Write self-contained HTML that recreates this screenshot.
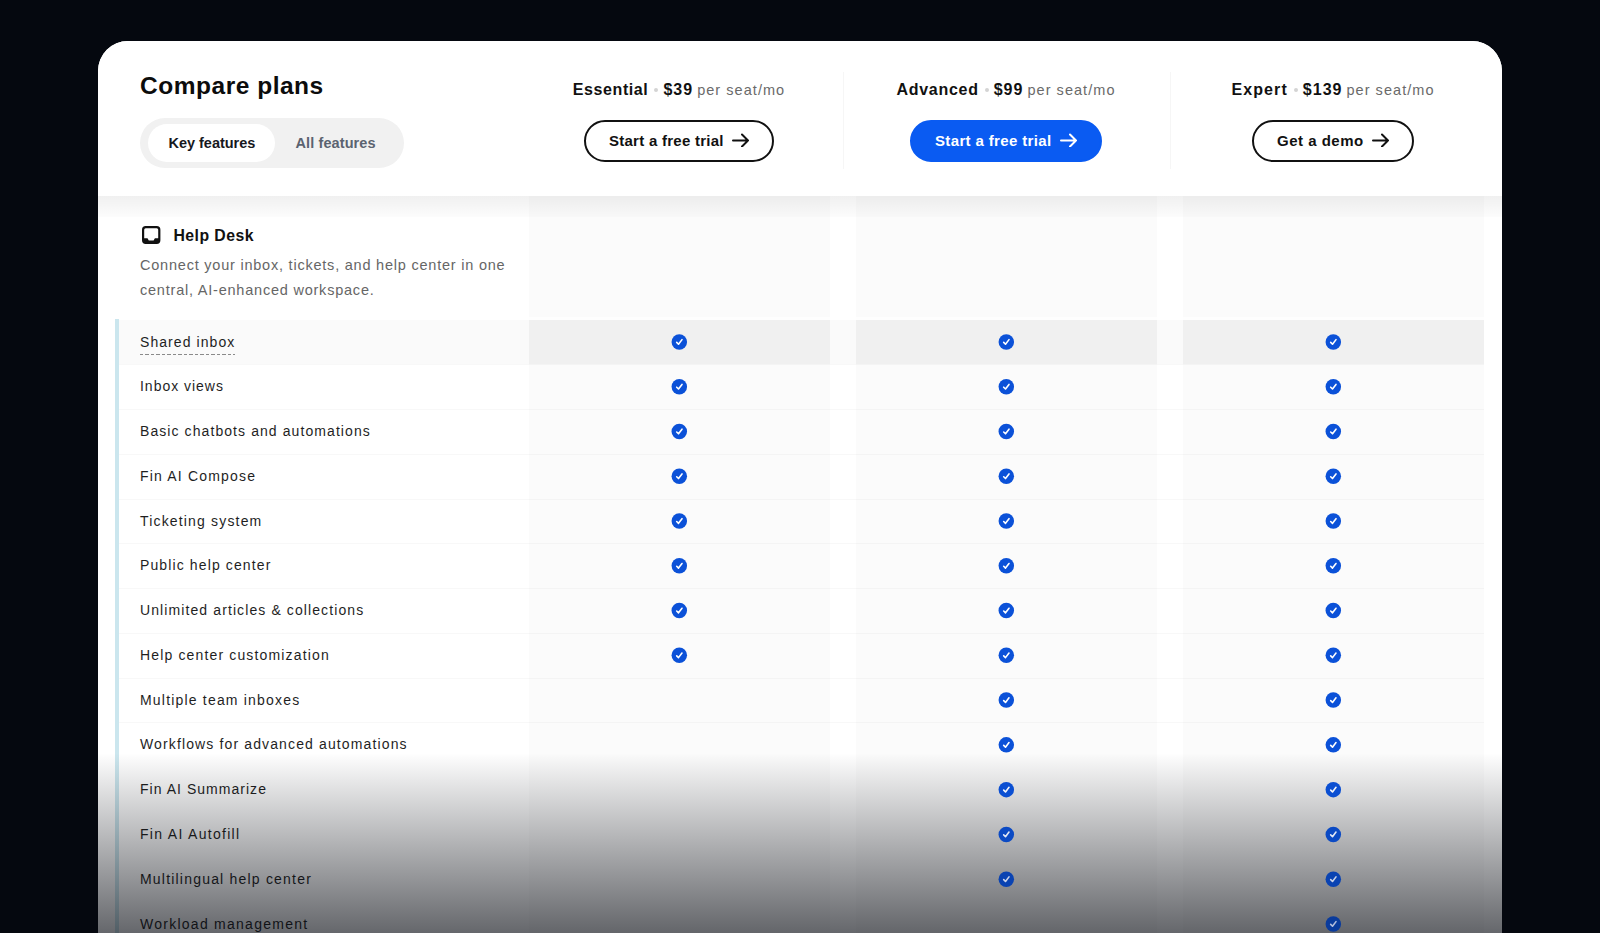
<!DOCTYPE html>
<html lang="en"><head><meta charset="utf-8"><title>Compare plans</title>
<style>
*{box-sizing:border-box;margin:0;padding:0}
html,body{width:1600px;height:933px;overflow:hidden;background:#05080f}
body{font-family:"Liberation Sans",Arial,sans-serif;color:#111;position:relative}
.card{position:absolute;left:98px;top:41px;width:1404px;height:892px;background:#fff;border-radius:30px 30px 0 0;overflow:hidden}
.hdr{position:absolute;left:0;top:0;width:1404px;height:155px;background:#fff;box-shadow:none;z-index:5}
.title{position:absolute;left:42px;top:29.5px;font-size:24.5px;font-weight:700;line-height:30px;letter-spacing:.52px;color:#0c0c0c;white-space:nowrap}
.tog{position:absolute;left:42px;top:77px;width:264px;height:50px;border-radius:25px;background:#f1f1f1}
.tog .on{position:absolute;left:8px;top:6px;width:127px;height:38px;border-radius:19px;background:#fff}
.tog span{position:absolute;top:0;height:50px;line-height:50px;font-size:14.5px;font-weight:700;white-space:nowrap}
.tog .k{left:28.5px;color:#16181d;letter-spacing:-.02px}
.tog .a{left:155.5px;color:#5b6370;letter-spacing:.1px}
.pc{position:absolute;top:0;width:327px;height:155px;text-align:center}
.pc .nm{position:absolute;left:0;right:0;top:38px;height:22px;line-height:22px;white-space:nowrap;font-size:16px;font-weight:700;color:#111}
.pc .nm .n{letter-spacing:.34px}
.pc .nm .d{display:inline-block;width:4px;height:4px;border-radius:2px;background:#d4d4d4;vertical-align:middle;margin:0 5px 1px 6px}
.pc .nm .p{letter-spacing:1px}
.pc .nm .u{font-weight:400;font-size:14.5px;color:#6a6a6a;letter-spacing:1.05px;margin-left:4px}
.btn{position:absolute;top:79px;height:42px;border-radius:21px;border:2px solid #111;background:#fff;left:50%;font-size:15px;font-weight:700;color:#111;line-height:38px;white-space:nowrap;text-align:left;padding-left:23px;letter-spacing:.24px}
.btn.b{background:#0a5bf2;border-color:#0a5bf2;color:#fff}
.btn .ar{position:absolute;top:11px;right:22px}
.sh{position:absolute;left:0;top:155px;width:1404px;height:21px;background:linear-gradient(to bottom,rgba(0,0,0,.06),rgba(0,0,0,.012));z-index:4}
.vd{position:absolute;top:31px;width:1px;height:97px;background:#f6f6f6}
.col{position:absolute;top:155px;width:301px;height:740px;background:#fbfbfb}
.sec{position:absolute;left:42px;top:183px}
.sec .ic{position:absolute;left:2px;top:2px}
.sec h3{position:absolute;left:33.5px;top:.6px;font-size:15.8px;font-weight:700;line-height:22px;letter-spacing:.45px;white-space:nowrap;color:#111}
.sec p{position:absolute;left:0;top:29px;width:400px;font-size:14.5px;line-height:25px;color:#666;letter-spacing:.78px;white-space:nowrap}
.bar{position:absolute;left:17px;top:278px;width:4px;height:620px;background:#cbe6ee}
.row{position:absolute;left:21px;width:1365px;height:44.77px;border-top:1px solid rgba(0,0,0,.028)}
.row .lb{position:absolute;left:21px;top:0;line-height:43px;font-size:14px;letter-spacing:1.1px;color:#1f1f1f;white-space:nowrap}
.row .ck{position:absolute;top:13.9px}
.cks{position:absolute;left:0;top:0;pointer-events:none}
.row.nb{border-top-color:transparent}
.gap{position:absolute;left:431px;top:276px;width:955px;height:2.5px;background:rgba(255,255,255,.7)}
.row.h{background:#fafafa;border-top:0}
.row.h i{position:absolute;top:0;height:100%;width:301px;background:#f0f0f0}
.row.h .lb{line-height:45px}
.row.h .lb span{display:inline-block;line-height:20px;padding-bottom:3.5px;background:repeating-linear-gradient(to right,#8a8a8a 0,#8a8a8a 3.5px,transparent 3.5px,transparent 5.5px) left bottom/100% 1.2px no-repeat}
.fade{position:absolute;left:0;top:712px;width:1404px;height:180px;background:linear-gradient(to bottom,rgba(7,10,17,0) 0%,rgba(7,10,17,.62) 100%);z-index:9}
</style></head><body>
<div class="card">

<div class="col" style="left:431px"></div>
<div class="col" style="left:757.5px"></div>
<div class="col" style="left:1085px"></div>
<div class="gap"></div>
<div class="bar"></div>
<div class="sh"></div>
<div class="sec"><svg class="ic" width="20" height="18" viewBox="0 0 20 18"><rect x="1.1" y="1.1" width="16.2" height="15.8" rx="2.6" fill="none" stroke="#111" stroke-width="2.2"/><path d="M1.1 12.2 H5.5 L6.8 14.4 H11.6 L12.9 12.2 H17.3 V14.5 C17.3 16 16.4 16.9 14.9 16.9 H3.5 C2 16.9 1.1 16 1.1 14.5 Z" fill="#111"/></svg><h3>Help Desk</h3><p>Connect your inbox, tickets, and help center in one<br>central, AI-enhanced workspace.</p></div>
<div class="row h" style="top:278.50px"><i style="left:410px"></i><i style="left:736.5px"></i><i style="left:1064px"></i><div class="lb" style="letter-spacing:1.07px"><span>Shared inbox</span></div></div>
<div class="row" style="top:323.27px"><div class="lb" style="letter-spacing:0.98px">Inbox views</div></div>
<div class="row" style="top:368.04px"><div class="lb" style="letter-spacing:1.08px">Basic chatbots and automations</div></div>
<div class="row" style="top:412.81px"><div class="lb" style="letter-spacing:1.18px">Fin AI Compose</div></div>
<div class="row" style="top:457.58px"><div class="lb" style="letter-spacing:1.17px">Ticketing system</div></div>
<div class="row" style="top:502.35px"><div class="lb" style="letter-spacing:1.12px">Public help center</div></div>
<div class="row" style="top:547.12px"><div class="lb" style="letter-spacing:1.1px">Unlimited articles &amp; collections</div></div>
<div class="row" style="top:591.89px"><div class="lb" style="letter-spacing:1.15px">Help center customization</div></div>
<div class="row" style="top:636.66px"><div class="lb" style="letter-spacing:1.19px">Multiple team inboxes</div></div>
<div class="row" style="top:681.43px"><div class="lb" style="letter-spacing:1.13px">Workflows for advanced automations</div></div>
<div class="row nb" style="top:726.20px"><div class="lb" style="letter-spacing:1.03px">Fin AI Summarize</div></div>
<div class="row nb" style="top:770.97px"><div class="lb" style="letter-spacing:1.3px">Fin AI Autofill</div></div>
<div class="row nb" style="top:815.74px"><div class="lb" style="letter-spacing:1.2px">Multilingual help center</div></div>
<div class="row nb" style="top:860.51px"><div class="lb" style="letter-spacing:1.26px">Workload management</div></div>
<svg class="cks" width="1404" height="892" viewBox="0 0 1404 892"><g transform="translate(573.30 292.94)"><circle cx="8" cy="8" r="7.75" fill="#0b51d8"/><path d="M5.4 8.5 L7.2 10.3 L10.7 5.7" fill="none" stroke="#fff" stroke-width="1.6" stroke-linecap="round" stroke-linejoin="round"/></g><g transform="translate(900.30 292.94)"><circle cx="8" cy="8" r="7.75" fill="#0b51d8"/><path d="M5.4 8.5 L7.2 10.3 L10.7 5.7" fill="none" stroke="#fff" stroke-width="1.6" stroke-linecap="round" stroke-linejoin="round"/></g><g transform="translate(1227.30 292.94)"><circle cx="8" cy="8" r="7.75" fill="#0b51d8"/><path d="M5.4 8.5 L7.2 10.3 L10.7 5.7" fill="none" stroke="#fff" stroke-width="1.6" stroke-linecap="round" stroke-linejoin="round"/></g><g transform="translate(573.30 337.70)"><circle cx="8" cy="8" r="7.75" fill="#0b51d8"/><path d="M5.4 8.5 L7.2 10.3 L10.7 5.7" fill="none" stroke="#fff" stroke-width="1.6" stroke-linecap="round" stroke-linejoin="round"/></g><g transform="translate(900.30 337.70)"><circle cx="8" cy="8" r="7.75" fill="#0b51d8"/><path d="M5.4 8.5 L7.2 10.3 L10.7 5.7" fill="none" stroke="#fff" stroke-width="1.6" stroke-linecap="round" stroke-linejoin="round"/></g><g transform="translate(1227.30 337.70)"><circle cx="8" cy="8" r="7.75" fill="#0b51d8"/><path d="M5.4 8.5 L7.2 10.3 L10.7 5.7" fill="none" stroke="#fff" stroke-width="1.6" stroke-linecap="round" stroke-linejoin="round"/></g><g transform="translate(573.30 382.48)"><circle cx="8" cy="8" r="7.75" fill="#0b51d8"/><path d="M5.4 8.5 L7.2 10.3 L10.7 5.7" fill="none" stroke="#fff" stroke-width="1.6" stroke-linecap="round" stroke-linejoin="round"/></g><g transform="translate(900.30 382.48)"><circle cx="8" cy="8" r="7.75" fill="#0b51d8"/><path d="M5.4 8.5 L7.2 10.3 L10.7 5.7" fill="none" stroke="#fff" stroke-width="1.6" stroke-linecap="round" stroke-linejoin="round"/></g><g transform="translate(1227.30 382.48)"><circle cx="8" cy="8" r="7.75" fill="#0b51d8"/><path d="M5.4 8.5 L7.2 10.3 L10.7 5.7" fill="none" stroke="#fff" stroke-width="1.6" stroke-linecap="round" stroke-linejoin="round"/></g><g transform="translate(573.30 427.25)"><circle cx="8" cy="8" r="7.75" fill="#0b51d8"/><path d="M5.4 8.5 L7.2 10.3 L10.7 5.7" fill="none" stroke="#fff" stroke-width="1.6" stroke-linecap="round" stroke-linejoin="round"/></g><g transform="translate(900.30 427.25)"><circle cx="8" cy="8" r="7.75" fill="#0b51d8"/><path d="M5.4 8.5 L7.2 10.3 L10.7 5.7" fill="none" stroke="#fff" stroke-width="1.6" stroke-linecap="round" stroke-linejoin="round"/></g><g transform="translate(1227.30 427.25)"><circle cx="8" cy="8" r="7.75" fill="#0b51d8"/><path d="M5.4 8.5 L7.2 10.3 L10.7 5.7" fill="none" stroke="#fff" stroke-width="1.6" stroke-linecap="round" stroke-linejoin="round"/></g><g transform="translate(573.30 472.02)"><circle cx="8" cy="8" r="7.75" fill="#0b51d8"/><path d="M5.4 8.5 L7.2 10.3 L10.7 5.7" fill="none" stroke="#fff" stroke-width="1.6" stroke-linecap="round" stroke-linejoin="round"/></g><g transform="translate(900.30 472.02)"><circle cx="8" cy="8" r="7.75" fill="#0b51d8"/><path d="M5.4 8.5 L7.2 10.3 L10.7 5.7" fill="none" stroke="#fff" stroke-width="1.6" stroke-linecap="round" stroke-linejoin="round"/></g><g transform="translate(1227.30 472.02)"><circle cx="8" cy="8" r="7.75" fill="#0b51d8"/><path d="M5.4 8.5 L7.2 10.3 L10.7 5.7" fill="none" stroke="#fff" stroke-width="1.6" stroke-linecap="round" stroke-linejoin="round"/></g><g transform="translate(573.30 516.78)"><circle cx="8" cy="8" r="7.75" fill="#0b51d8"/><path d="M5.4 8.5 L7.2 10.3 L10.7 5.7" fill="none" stroke="#fff" stroke-width="1.6" stroke-linecap="round" stroke-linejoin="round"/></g><g transform="translate(900.30 516.78)"><circle cx="8" cy="8" r="7.75" fill="#0b51d8"/><path d="M5.4 8.5 L7.2 10.3 L10.7 5.7" fill="none" stroke="#fff" stroke-width="1.6" stroke-linecap="round" stroke-linejoin="round"/></g><g transform="translate(1227.30 516.78)"><circle cx="8" cy="8" r="7.75" fill="#0b51d8"/><path d="M5.4 8.5 L7.2 10.3 L10.7 5.7" fill="none" stroke="#fff" stroke-width="1.6" stroke-linecap="round" stroke-linejoin="round"/></g><g transform="translate(573.30 561.55)"><circle cx="8" cy="8" r="7.75" fill="#0b51d8"/><path d="M5.4 8.5 L7.2 10.3 L10.7 5.7" fill="none" stroke="#fff" stroke-width="1.6" stroke-linecap="round" stroke-linejoin="round"/></g><g transform="translate(900.30 561.55)"><circle cx="8" cy="8" r="7.75" fill="#0b51d8"/><path d="M5.4 8.5 L7.2 10.3 L10.7 5.7" fill="none" stroke="#fff" stroke-width="1.6" stroke-linecap="round" stroke-linejoin="round"/></g><g transform="translate(1227.30 561.55)"><circle cx="8" cy="8" r="7.75" fill="#0b51d8"/><path d="M5.4 8.5 L7.2 10.3 L10.7 5.7" fill="none" stroke="#fff" stroke-width="1.6" stroke-linecap="round" stroke-linejoin="round"/></g><g transform="translate(573.30 606.33)"><circle cx="8" cy="8" r="7.75" fill="#0b51d8"/><path d="M5.4 8.5 L7.2 10.3 L10.7 5.7" fill="none" stroke="#fff" stroke-width="1.6" stroke-linecap="round" stroke-linejoin="round"/></g><g transform="translate(900.30 606.33)"><circle cx="8" cy="8" r="7.75" fill="#0b51d8"/><path d="M5.4 8.5 L7.2 10.3 L10.7 5.7" fill="none" stroke="#fff" stroke-width="1.6" stroke-linecap="round" stroke-linejoin="round"/></g><g transform="translate(1227.30 606.33)"><circle cx="8" cy="8" r="7.75" fill="#0b51d8"/><path d="M5.4 8.5 L7.2 10.3 L10.7 5.7" fill="none" stroke="#fff" stroke-width="1.6" stroke-linecap="round" stroke-linejoin="round"/></g><g transform="translate(900.30 651.10)"><circle cx="8" cy="8" r="7.75" fill="#0b51d8"/><path d="M5.4 8.5 L7.2 10.3 L10.7 5.7" fill="none" stroke="#fff" stroke-width="1.6" stroke-linecap="round" stroke-linejoin="round"/></g><g transform="translate(1227.30 651.10)"><circle cx="8" cy="8" r="7.75" fill="#0b51d8"/><path d="M5.4 8.5 L7.2 10.3 L10.7 5.7" fill="none" stroke="#fff" stroke-width="1.6" stroke-linecap="round" stroke-linejoin="round"/></g><g transform="translate(900.30 695.87)"><circle cx="8" cy="8" r="7.75" fill="#0b51d8"/><path d="M5.4 8.5 L7.2 10.3 L10.7 5.7" fill="none" stroke="#fff" stroke-width="1.6" stroke-linecap="round" stroke-linejoin="round"/></g><g transform="translate(1227.30 695.87)"><circle cx="8" cy="8" r="7.75" fill="#0b51d8"/><path d="M5.4 8.5 L7.2 10.3 L10.7 5.7" fill="none" stroke="#fff" stroke-width="1.6" stroke-linecap="round" stroke-linejoin="round"/></g></svg>
<div class="hdr">
<div class="title">Compare plans</div>
<div class="tog"><div class="on"></div><span class="k">Key features</span><span class="a">All features</span></div>
<div class="pc" style="left:417.5px"><div class="nm"><span class="n" style="letter-spacing:0.6px">Essential</span><span class="d"></span><span class="p">$39</span><span class="u">per seat/mo</span></div><div class="btn" style="width:190px;margin-left:-95.0px;letter-spacing:0.26px">Start a free trial<svg class="ar" viewBox="0 -0.5 18 14" width="18" height="14"><path d="M1 7 H16 M10 1 L16 7 L10 13" fill="none" stroke="currentColor" stroke-width="2" stroke-linecap="round" stroke-linejoin="round"/></svg></div></div>
<div class="pc" style="left:744.5px"><div class="nm"><span class="n" style="letter-spacing:0.72px">Advanced</span><span class="d"></span><span class="p">$99</span><span class="u">per seat/mo</span></div><div class="btn b" style="width:192px;margin-left:-96.0px;letter-spacing:0.36px">Start a free trial<svg class="ar" viewBox="0 -0.5 18 14" width="18" height="14"><path d="M1 7 H16 M10 1 L16 7 L10 13" fill="none" stroke="currentColor" stroke-width="2" stroke-linecap="round" stroke-linejoin="round"/></svg></div></div>
<div class="pc" style="left:1071.5px"><div class="nm"><span class="n" style="letter-spacing:1.1px">Expert</span><span class="d"></span><span class="p">$139</span><span class="u">per seat/mo</span></div><div class="btn" style="width:162px;margin-left:-81.0px;letter-spacing:0.5px">Get a demo<svg class="ar" viewBox="0 -0.5 18 14" width="18" height="14"><path d="M1 7 H16 M10 1 L16 7 L10 13" fill="none" stroke="currentColor" stroke-width="2" stroke-linecap="round" stroke-linejoin="round"/></svg></div></div>
<div class="vd" style="left:745px"></div><div class="vd" style="left:1072px"></div>
</div>
<div class="fade"></div>
<svg class="cks" style="z-index:10" width="1404" height="892" viewBox="0 0 1404 892"><g transform="translate(900.30 740.63)"><circle cx="8" cy="8" r="7.75" fill="#0b4fd2"/><path d="M5.4 8.5 L7.2 10.3 L10.7 5.7" fill="none" stroke="#f4f6fb" stroke-width="1.6" stroke-linecap="round" stroke-linejoin="round"/></g><g transform="translate(1227.30 740.63)"><circle cx="8" cy="8" r="7.75" fill="#0b4fd2"/><path d="M5.4 8.5 L7.2 10.3 L10.7 5.7" fill="none" stroke="#f4f6fb" stroke-width="1.6" stroke-linecap="round" stroke-linejoin="round"/></g><g transform="translate(900.30 785.40)"><circle cx="8" cy="8" r="7.75" fill="#0b4ac4"/><path d="M5.4 8.5 L7.2 10.3 L10.7 5.7" fill="none" stroke="#e3e8f4" stroke-width="1.6" stroke-linecap="round" stroke-linejoin="round"/></g><g transform="translate(1227.30 785.40)"><circle cx="8" cy="8" r="7.75" fill="#0b4ac4"/><path d="M5.4 8.5 L7.2 10.3 L10.7 5.7" fill="none" stroke="#e3e8f4" stroke-width="1.6" stroke-linecap="round" stroke-linejoin="round"/></g><g transform="translate(900.30 830.17)"><circle cx="8" cy="8" r="7.75" fill="#0a43b2"/><path d="M5.4 8.5 L7.2 10.3 L10.7 5.7" fill="none" stroke="#cdd5ea" stroke-width="1.6" stroke-linecap="round" stroke-linejoin="round"/></g><g transform="translate(1227.30 830.17)"><circle cx="8" cy="8" r="7.75" fill="#0a43b2"/><path d="M5.4 8.5 L7.2 10.3 L10.7 5.7" fill="none" stroke="#cdd5ea" stroke-width="1.6" stroke-linecap="round" stroke-linejoin="round"/></g><g transform="translate(1227.30 874.94)"><circle cx="8" cy="8" r="7.75" fill="#0a3b9c"/><path d="M5.4 8.5 L7.2 10.3 L10.7 5.7" fill="none" stroke="#b4bedb" stroke-width="1.6" stroke-linecap="round" stroke-linejoin="round"/></g></svg>
</div></body></html>
